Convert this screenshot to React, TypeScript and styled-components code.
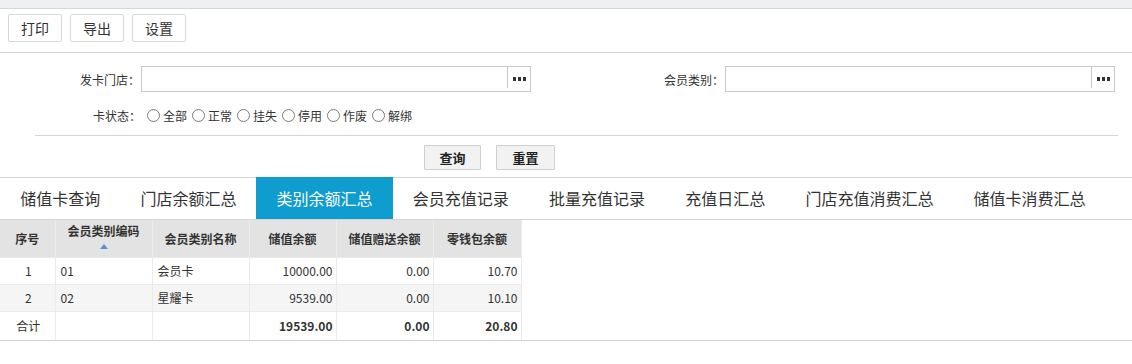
import React from 'react';
import styled, { createGlobalStyle } from 'styled-components';

const GlobalStyle = createGlobalStyle`
  body {
    margin: 0;
    background: #fff;
    font-family: "Noto Sans CJK SC", "Liberation Sans", sans-serif;
    color: #333;
  }
`;

const tabs = ['储值卡查询', '门店余额汇总', '类别余额汇总', '会员充值记录', '批量充值记录', '充值日汇总', '门店充值消费汇总', '储值卡消费汇总'];
const statuses = ['全部', '正常', '挂失', '停用', '作废', '解绑'];

const columns = [
  { title: '序号', width: 55 },
  { title: '会员类别编码', width: 97, sorted: true },
  { title: '会员类别名称', width: 97 },
  { title: '储值余额', width: 87 },
  { title: '储值赠送余额', width: 97 },
  { title: '零钱包余额', width: 88 },
];

const rows = [
  ['1', '01', '会员卡', '10000.00', '0.00', '10.70'],
  ['2', '02', '星耀卡', '9539.00', '0.00', '10.10'],
];
const totals = ['合计', '', '', '19539.00', '0.00', '20.80'];
const aligns: Array<'center' | 'left' | 'right'> = ['center', 'left', 'left', 'right', 'right', 'right'];

const Page = styled.div`
  width: 1132px;
`;

const TopStrip = styled.div`
  height: 8px;
  background: #eef0f4;
  border-bottom: 1px solid #d6d6d6;
`;

const Toolbar = styled.div`
  display: flex;
  gap: 8px;
  padding: 5px 8px 10px;
  border-bottom: 1px solid #d4d4d4;
`;

const ToolButton = styled.button`
  width: 54px;
  height: 28px;
  background: #fff;
  border: 1px solid #d8d8d8;
  border-radius: 2px;
  font: 14px "Noto Sans CJK SC", sans-serif;
  color: #333;
  padding: 0;
`;

const Form = styled.div`
  padding-top: 13px;
`;

const FieldRow = styled.div`
  display: grid;
  grid-template-columns: 141px 390px 194px 390px;
  align-items: center;
  height: 26px;
  margin-bottom: 10px;
`;

const Label = styled.label`
  font-size: 12px;
  text-align: right;
  padding-right: 1px;
  color: #333;
`;

const PickerBox = styled.div`
  display: flex;
  height: 26px;
  box-sizing: border-box;
  border: 1px solid #c8c8c8;
  background: #fff;
`;

const PickerInput = styled.input`
  flex: 1;
  border: none;
  outline: none;
  min-width: 0;
  padding: 0 4px;
`;

const PickerButton = styled.span`
  width: 22px;
  display: flex;
  align-items: center;
  justify-content: center;
  border-left: 1px solid #c8c8c8;
  margin-bottom: 3px;
  padding-top: 3px;
`;

const StatusRow = styled.div`
  display: flex;
  align-items: center;
  height: 26px;
`;

const StatusLabel = styled(Label)`
  width: 141px;
`;

const RadioItem = styled.label`
  display: flex;
  align-items: center;
  font-size: 12px;
  margin-left: 5px;
`;

const Radio = styled.input`
  appearance: none;
  width: 13px;
  height: 13px;
  margin: 0 3px 0 0;
  border: 1px solid #7a7a7a;
  border-radius: 50%;
  background: #fff;
`;

const Divider = styled.div`
  height: 1px;
  background: #d4d4d4;
  margin: 7px 14px 0 35px;
`;

const ActionRow = styled.div`
  display: flex;
  gap: 15px;
  padding: 9px 0 7px 424px;
`;

const ActionButton = styled.button<{ $w: number }>`
  width: ${p => p.$w}px;
  height: 25px;
  background: #f2f2f2;
  border: 1px solid #cfcfcf;
  border-radius: 1px;
  font: bold 13px "Noto Sans CJK SC", sans-serif;
  color: #222;
  padding: 0;
`;

const TabBar = styled.div`
  display: flex;
  border-top: 1px solid #d4d4d4;
  border-bottom: 1px solid #d4d4d4;
  height: 41px;
`;

const Tab = styled.div<{ $active?: boolean }>`
  padding: 0 20px 0 20.2px;
  margin-top: -1px;
  height: 42px;
  display: flex;
  align-items: center;
  font-size: 16px;
  color: ${p => (p.$active ? '#fff' : '#333')};
  background: ${p => (p.$active ? '#0f9ccf' : 'transparent')};
`;

const TableWrap = styled.div`
  border-bottom: 1px solid #cfcfcf;
`;

const Table = styled.table`
  border-collapse: collapse;
  table-layout: fixed;
  font-size: 12px;
  color: #333;
`;

const HeadCell = styled.th<{ $w: number }>`
  width: ${p => p.$w}px;
  height: 37px;
  box-sizing: border-box;
  background: #e3e3e3;
  border-right: 1px solid #ececec;
  font-weight: bold;
  text-align: center;
  padding: 0;
  vertical-align: middle;
`;

const SortWrap = styled.div`
  display: flex;
  flex-direction: column;
  align-items: center;
  margin-top: -6px;
`;

const SortArrow = styled.span`
  width: 0;
  height: 0;
  margin-top: 5px;
  border-left: 4px solid transparent;
  border-right: 4px solid transparent;
  border-bottom: 5px solid #5a8fd4;
`;

const Row = styled.tr<{ $stripe?: boolean }>`
  background: ${p => (p.$stripe ? '#f5f5f5' : '#fff')};
  border-top: 1px solid #ebebeb;
`;

const Cell = styled.td<{ $align: string; $bold?: boolean; $h?: number }>`
  height: ${p => p.$h ?? 26}px;
  padding: 0 3px 0 5px;
  text-align: ${p => p.$align};
  font-weight: ${p => (p.$bold ? 'bold' : 'normal')};
  border-right: 1px solid #ebebeb;
  white-space: nowrap;
`;

const Dots = () => (
  <svg width="13" height="4" viewBox="0 0 13 4">
    <rect x="0" y="0" width="3" height="4" fill="#333" />
    <rect x="5" y="0" width="3" height="4" fill="#333" />
    <rect x="10" y="0" width="3" height="4" fill="#333" />
  </svg>
);

const Picker = () => (
  <PickerBox>
    <PickerInput />
    <PickerButton>
      <Dots />
    </PickerButton>
  </PickerBox>
);

export default function App() {
  return (
    <Page>
      <GlobalStyle />
      <TopStrip />
      <Toolbar>
        <ToolButton>打印</ToolButton>
        <ToolButton>导出</ToolButton>
        <ToolButton>设置</ToolButton>
      </Toolbar>
      <Form>
        <FieldRow>
          <Label>发卡门店：</Label>
          <Picker />
          <Label>会员类别：</Label>
          <Picker />
        </FieldRow>
        <StatusRow>
          <StatusLabel>卡状态：</StatusLabel>
          {statuses.map(s => (
            <RadioItem key={s}>
              <Radio type="radio" name="status" />
              {s}
            </RadioItem>
          ))}
        </StatusRow>
        <Divider />
        <ActionRow>
          <ActionButton $w={57}>查询</ActionButton>
          <ActionButton $w={59}>重置</ActionButton>
        </ActionRow>
      </Form>
      <TabBar>
        {tabs.map(t => (
          <Tab key={t} $active={t === '类别余额汇总'}>
            {t}
          </Tab>
        ))}
      </TabBar>
      <TableWrap>
        <Table>
          <thead>
            <tr>
              {columns.map(c => (
                <HeadCell key={c.title} $w={c.width}>
                  {c.sorted ? (
                    <SortWrap>
                      {c.title}
                      <SortArrow />
                    </SortWrap>
                  ) : (
                    c.title
                  )}
                </HeadCell>
              ))}
            </tr>
          </thead>
          <tbody>
            {rows.map((r, i) => (
              <Row key={i} $stripe={i % 2 === 1}>
                {r.map((v, j) => (
                  <Cell key={j} $align={aligns[j]}>
                    {v}
                  </Cell>
                ))}
              </Row>
            ))}
            <Row>
              {totals.map((v, j) => (
                <Cell key={j} $align={aligns[j]} $bold={j > 2} $h={28}>
                  {v}
                </Cell>
              ))}
            </Row>
          </tbody>
        </Table>
      </TableWrap>
    </Page>
  );
}
